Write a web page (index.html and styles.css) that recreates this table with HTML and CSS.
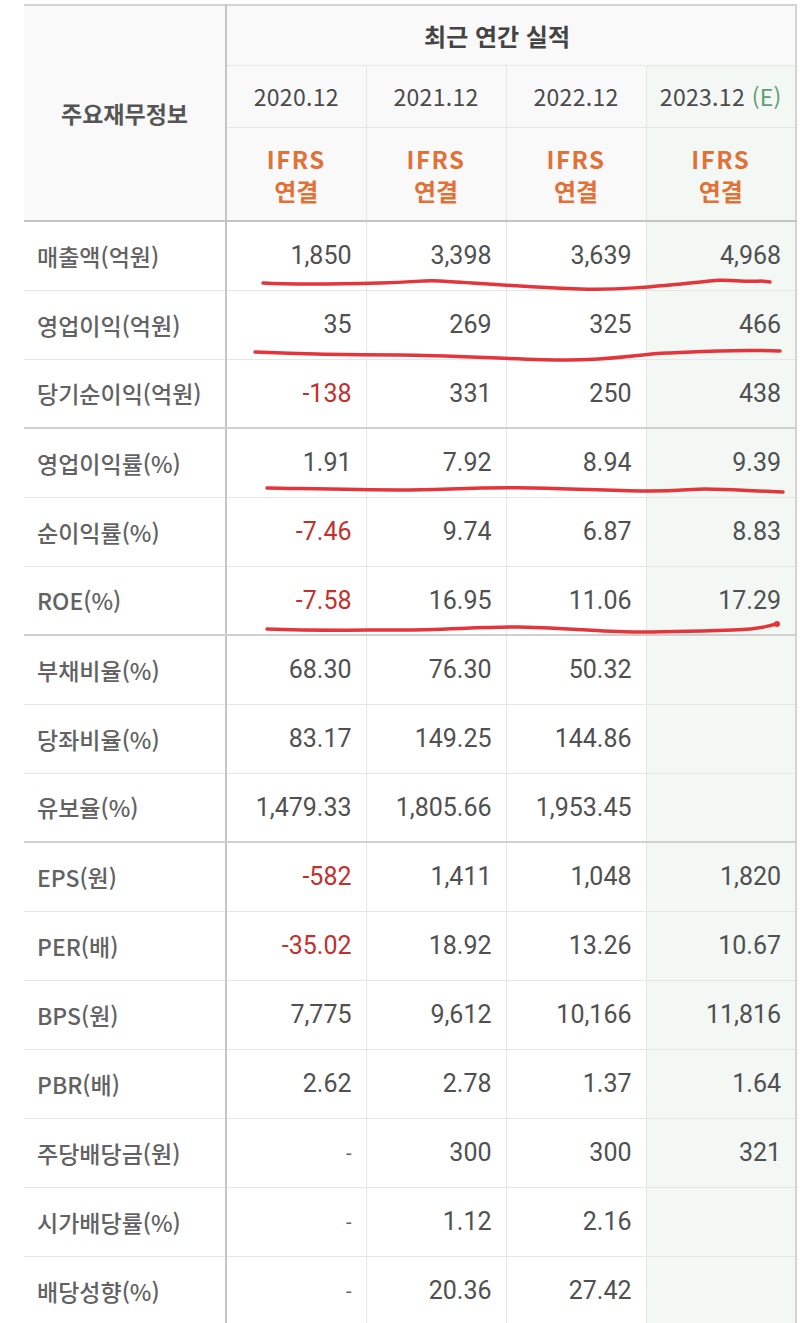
FILE: index.html
```html
<!DOCTYPE html>
<html lang="ko">
<head>
<meta charset="utf-8">
<title>주요재무정보</title>
<link rel="stylesheet" href="styles.css">
</head>
<body>
<div class="page">
  <table class="fin">
    <colgroup>
      <col class="c-label"><col class="c-y"><col class="c-y"><col class="c-y"><col class="c-e">
    </colgroup>
    <thead>
      <tr class="h1">
        <th class="head-label" rowspan="3">주요재무정보</th>
        <th class="head-title" colspan="4">최근 연간 실적</th>
      </tr>
      <tr class="h2">
        <th class="year">2020.12</th>
        <th class="year">2021.12</th>
        <th class="year">2022.12</th>
        <th class="year est">2023.12 <span class="e">(E)</span></th>
      </tr>
      <tr class="h3">
        <th class="ifrs"><span class="lat">IFRS</span><br>연결</th>
        <th class="ifrs"><span class="lat">IFRS</span><br>연결</th>
        <th class="ifrs"><span class="lat">IFRS</span><br>연결</th>
        <th class="ifrs est"><span class="lat">IFRS</span><br>연결</th>
      </tr>
    </thead>
    <tbody>
      <tr><th>매출액(억원)</th><td>1,850</td><td>3,398</td><td>3,639</td><td class="est">4,968</td></tr>
      <tr><th>영업이익(억원)</th><td>35</td><td>269</td><td>325</td><td class="est">466</td></tr>
      <tr class="grp"><th>당기순이익(억원)</th><td class="neg">-138</td><td>331</td><td>250</td><td class="est">438</td></tr>
      <tr><th>영업이익률(%)</th><td>1.91</td><td>7.92</td><td>8.94</td><td class="est">9.39</td></tr>
      <tr><th>순이익률(%)</th><td class="neg">-7.46</td><td>9.74</td><td>6.87</td><td class="est">8.83</td></tr>
      <tr class="grp"><th>ROE(%)</th><td class="neg">-7.58</td><td>16.95</td><td>11.06</td><td class="est">17.29</td></tr>
      <tr><th>부채비율(%)</th><td>68.30</td><td>76.30</td><td>50.32</td><td class="est"></td></tr>
      <tr><th>당좌비율(%)</th><td>83.17</td><td>149.25</td><td>144.86</td><td class="est"></td></tr>
      <tr class="grp"><th>유보율(%)</th><td>1,479.33</td><td>1,805.66</td><td>1,953.45</td><td class="est"></td></tr>
      <tr><th>EPS(원)</th><td class="neg">-582</td><td>1,411</td><td>1,048</td><td class="est">1,820</td></tr>
      <tr><th>PER(배)</th><td class="neg">-35.02</td><td>18.92</td><td>13.26</td><td class="est">10.67</td></tr>
      <tr><th>BPS(원)</th><td>7,775</td><td>9,612</td><td>10,166</td><td class="est">11,816</td></tr>
      <tr><th>PBR(배)</th><td>2.62</td><td>2.78</td><td>1.37</td><td class="est">1.64</td></tr>
      <tr><th>주당배당금(원)</th><td class="dash">-</td><td>300</td><td>300</td><td class="est">321</td></tr>
      <tr><th>시가배당률(%)</th><td class="dash">-</td><td>1.12</td><td>2.16</td><td class="est"></td></tr>
      <tr><th>배당성향(%)</th><td class="dash">-</td><td>20.36</td><td>27.42</td><td class="est"></td></tr>
    </tbody>
  </table>
  <svg class="marks" viewBox="0 0 800 1323" width="800" height="1323" aria-hidden="true">
    <g fill="none" stroke="#e3353b" stroke-width="3.5" stroke-linecap="round" stroke-linejoin="round">
      <path d="M263,283 C300,285 340,284 380,283 S420,280 440,281 S540,288 580,289 S650,287 690,283 S720,280 740,281 S760,280 770,282"/>
      <path d="M255,352 C300,354 350,355 400,355 S520,360 567,360 S640,354 667,353 S730,349 780,351"/>
      <path d="M267,488 C320,489 360,490 400,490 S480,487 533,488 S620,491 650,491 S690,489 705,489 S760,491 783,492"/>
      <path d="M267,629 C320,631 360,630 400,630 S480,627 517,627 S600,632 633,632 S700,631 733,630 S765,626 777,624"/>
    </g>
    <circle cx="777" cy="624" r="3" fill="#e3353b"/>
  </svg>
</div>
</body>
</html>
```
FILE: styles.css
```css
html, body {
  margin: 0;
  padding: 0;
  background: #ffffff;
}

.page {
  position: relative;
  width: 800px;
  height: 1323px;
  overflow: hidden;
  padding: 4px 0 0 24px;
  box-sizing: border-box;
}

.fin {
  border-collapse: collapse;
  table-layout: fixed;
  width: 772px;
  font-family: Roboto, "Noto Sans CJK KR", sans-serif;
  color: #4a4a4a;
}

.c-label { width: 202px; }
.c-y { width: 140px; }
.c-e { width: 150px; }

.fin th,
.fin td {
  padding: 0;
  border: 1px solid #e6e6e6;
  font-weight: normal;
}

.fin thead th {
  background: #f9f9f9;
  font-family: "Noto Sans CJK KR", sans-serif;
  text-align: center;
}

.fin thead tr.h1 th {
  border-top: 2px solid #d4d4d4;
}

.h1 { height: 60px; }
.h2 { height: 62px; }
.h3 { height: 94px; }

.head-label {
  font-size: 23px;
  font-weight: 700 !important;
  color: #555;
  border-right: 2px solid #c4c4c4 !important;
  border-left: none !important;
  border-bottom: 2px solid #c4c4c4 !important;
}

.head-title {
  font-size: 24px;
  font-weight: 700 !important;
  color: #444;
  padding-right: 28px !important;
  border-right: 2px solid #d4d4d4 !important;
}

.year {
  font-size: 23px;
  color: #4a4a4a;
  letter-spacing: 0.3px;
}

.year .e {
  color: #5f9e6e;
}

.ifrs {
  font-size: 24px;
  font-weight: 700 !important;
  color: #e27138;
  line-height: 32px;
  border-bottom: 2px solid #c4c4c4 !important;
  padding-top: 2px !important;
}

.ifrs .lat {
  letter-spacing: 1.5px;
}

.fin thead .est,
.fin tbody .est {
  background: #f3f8f4;
}

.fin .est {
  border-right: 2px solid #d4d4d4;
}

.fin tbody tr { height: 69px; }

.fin tbody th {
  text-align: left;
  padding-left: 13px;
  font-family: "Noto Sans CJK KR", sans-serif;
  font-size: 23px;
  font-weight: 500;
  color: #626262;
  border-left: none;
  border-right: 2px solid #c4c4c4;
  background: #ffffff;
}

.fin tbody td {
  text-align: right;
  padding-right: 14px;
  font-size: 25px;
  color: #505050;
}

.fin tbody td.neg {
  color: #c4302b;
}

.fin tbody td.dash {
  font-size: 20px;
  color: #666;
}

.fin tbody tr.grp th,
.fin tbody tr.grp td {
  border-bottom: 2px solid #d0d0d0;
}

.marks {
  position: absolute;
  left: 0;
  top: 0;
  pointer-events: none;
}
```
